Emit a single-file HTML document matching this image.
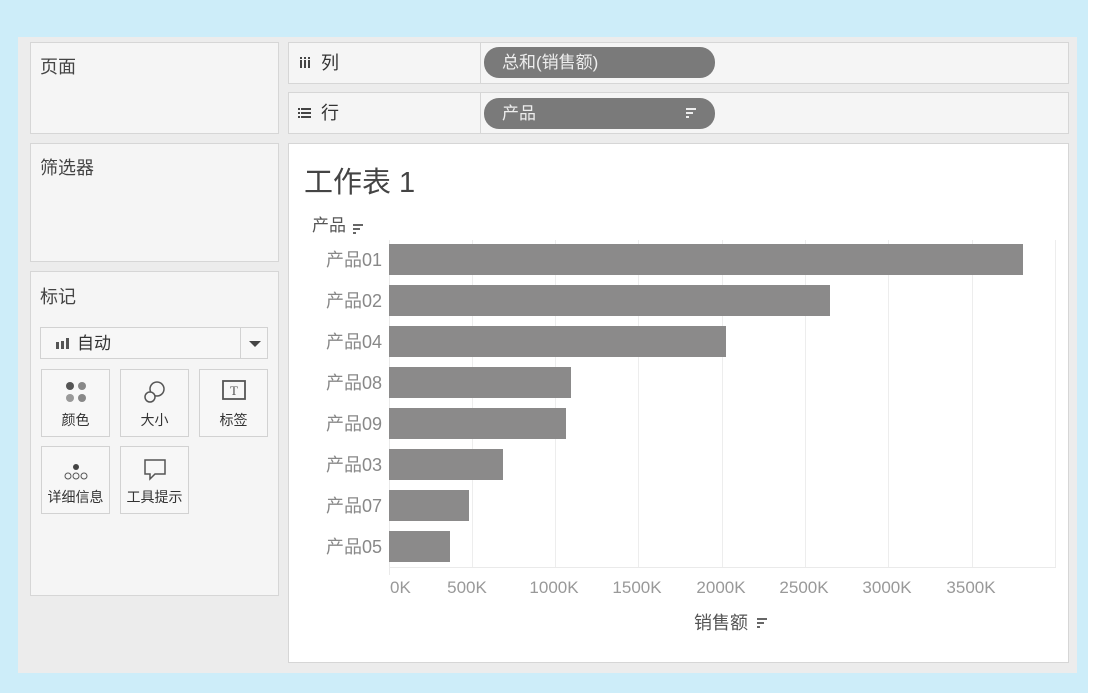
<!DOCTYPE html>
<html><head><meta charset="utf-8"><style>
*{margin:0;padding:0;box-sizing:border-box}
body{width:1100px;height:693px;background:#fff;position:relative;overflow:hidden;font-family:"Liberation Sans","Noto Sans CJK SC",sans-serif;color:#444;line-height:1.2}
.abs{position:absolute}
.bg{left:0;top:0;width:1088px;height:693px;background:#cdedf9}
.win{left:18px;top:37px;width:1059px;height:636px;background:#ececec}
.card{background:#f5f5f5;border:1px solid #d6d6d6}
.h{font-size:18px;color:#444}
.pill{background:#7a7a7a;color:#eee;border-radius:15px;height:31px;font-size:17px;line-height:31px;padding-left:18px}
.btn{background:#f7f7f7;border:1px solid #d2d2d2;width:69px;height:68px;font-size:14px;color:#333;text-align:center}
.lab{font-size:18px;color:#888;text-align:right;width:75px}
.bar{background:#8b8a8a;height:31px;left:389px}
.grid{width:1px;background:#ededed;top:240px;height:327px}
.tick{font-size:17px;color:#999;top:578px;width:80px;text-align:center}
</style></head><body>
<div class="abs bg"></div>
<div class="abs win"></div>
<div class="abs card" style="left:30px;top:42px;width:249px;height:92px"></div>
<div class="abs h" style="left:40px;top:57px">页面</div>
<div class="abs card" style="left:30px;top:143px;width:249px;height:119px"></div>
<div class="abs h" style="left:40px;top:158px">筛选器</div>
<div class="abs card" style="left:30px;top:271px;width:249px;height:325px"></div>
<div class="abs h" style="left:40px;top:287px">标记</div>
<div class="abs" style="left:40px;top:327px;width:228px;height:32px;background:#f7f7f7;border:1px solid #d2d2d2"></div>
<div class="abs" style="left:240px;top:328px;width:1px;height:30px;background:#d2d2d2"></div>
<div class="abs" style="left:249px;top:341px;width:0;height:0;border-left:6px solid transparent;border-right:6px solid transparent;border-top:6px solid #444"></div>
<svg class="abs" style="left:55px;top:337px" width="16" height="14"><rect x="1" y="5" width="3" height="7" fill="#555"/><rect x="6" y="4" width="3" height="8" fill="#555"/><rect x="11" y="1" width="3" height="11" fill="#555"/></svg>
<div class="abs" style="left:77px;top:334px;font-size:17px;color:#333">自动</div>

<div class="abs btn" style="left:41px;top:369px"><svg width="30" height="34" style="margin-top:7px"><circle cx="9" cy="9" r="4" fill="#555"/><circle cx="21" cy="9" r="4" fill="#888"/><circle cx="9" cy="21" r="4" fill="#999"/><circle cx="21" cy="21" r="4" fill="#888"/></svg><div style="margin-top:-3px">颜色</div></div>
<div class="abs btn" style="left:120px;top:369px"><svg width="30" height="34" style="margin-top:7px"><circle cx="17" cy="12" r="7" fill="none" stroke="#555" stroke-width="1.5"/><circle cx="10" cy="20" r="5" fill="#f7f7f7" stroke="#555" stroke-width="1.5"/></svg><div style="margin-top:-3px">大小</div></div>
<div class="abs btn" style="left:199px;top:369px"><svg width="30" height="34" style="margin-top:7px"><rect x="4" y="4" width="22" height="18" fill="none" stroke="#555" stroke-width="1.8"/><text x="15" y="18" font-size="13" text-anchor="middle" fill="#555" font-family="Liberation Serif">T</text></svg><div style="margin-top:-3px">标签</div></div>
<div class="abs btn" style="left:41px;top:446px"><svg width="30" height="34" style="margin-top:7px"><circle cx="15" cy="13" r="3" fill="#444"/><circle cx="7" cy="22" r="3" fill="none" stroke="#555"/><circle cx="15" cy="22" r="3" fill="none" stroke="#555"/><circle cx="23" cy="22" r="3" fill="none" stroke="#555"/></svg><div style="margin-top:-3px">详细信息</div></div>
<div class="abs btn" style="left:120px;top:446px"><svg width="30" height="34" style="margin-top:7px"><path d="M5 6h20v14h-10l-5 5v-5h-5z" fill="none" stroke="#555" stroke-width="1.5"/></svg><div style="margin-top:-3px">工具提示</div></div>

<div class="abs card" style="left:288px;top:42px;width:781px;height:42px"></div>
<div class="abs" style="left:480px;top:43px;width:1px;height:40px;background:#d6d6d6"></div>
<svg class="abs" style="left:299px;top:57px" width="14" height="12"><rect x="1" y="3" width="2" height="8" fill="#444"/><rect x="5" y="3" width="2" height="8" fill="#444"/><rect x="9" y="3" width="2" height="8" fill="#444"/><rect x="1" y="0" width="2" height="2" fill="#444"/><rect x="5" y="0" width="2" height="2" fill="#444"/><rect x="9" y="0" width="2" height="2" fill="#444"/></svg>
<div class="abs h" style="left:321px;top:53px;color:#333">列</div>
<div class="abs pill" style="left:484px;top:47px;width:231px">总和(销售额)</div>
<div class="abs card" style="left:288px;top:92px;width:781px;height:42px"></div>
<div class="abs" style="left:480px;top:93px;width:1px;height:40px;background:#d6d6d6"></div>
<svg class="abs" style="left:298px;top:107px" width="14" height="12"><rect x="0" y="1" width="2" height="2" fill="#444"/><rect x="3" y="1" width="10" height="2" fill="#444"/><rect x="0" y="5" width="2" height="2" fill="#444"/><rect x="3" y="5" width="10" height="2" fill="#444"/><rect x="0" y="9" width="2" height="2" fill="#444"/><rect x="3" y="9" width="10" height="2" fill="#444"/></svg>
<div class="abs h" style="left:321px;top:103px;color:#333">行</div>
<div class="abs pill" style="left:484px;top:98px;width:231px">产品</div>
<svg class="abs" style="left:686px;top:107px" width="12" height="12"><rect x="0" y="1" width="10" height="2" fill="#eee"/><rect x="0" y="5" width="7" height="2" fill="#eee"/><rect x="0" y="9" width="3" height="2" fill="#eee"/></svg>

<div class="abs" style="left:288px;top:143px;width:781px;height:520px;background:#fff;border:1px solid #d6d6d6"></div>
<div class="abs" style="left:304px;top:166px;font-size:29px;color:#444">工作表 1</div>
<div class="abs" style="left:312px;top:216px;font-size:17px;color:#555">产品</div>
<svg class="abs" style="left:353px;top:223px" width="12" height="12"><rect x="0" y="1" width="10" height="2" fill="#666"/><rect x="0" y="5" width="7" height="2" fill="#666"/><rect x="0" y="9" width="3" height="2" fill="#666"/></svg>

<div class="abs grid" style="left:472px"></div><div class="abs grid" style="left:555px"></div><div class="abs grid" style="left:638px"></div><div class="abs grid" style="left:722px"></div><div class="abs grid" style="left:805px"></div><div class="abs grid" style="left:888px"></div><div class="abs grid" style="left:972px"></div><div class="abs grid" style="left:1055px"></div>
<div class="abs" style="left:389px;top:567px;width:667px;height:1px;background:#eaeaea"></div>
<div class="abs" style="left:389px;top:240px;width:1px;height:335px;background:#eaeaea"></div>

<div class="abs bar" style="top:244px;width:634px"></div><div class="abs lab" style="left:307px;top:250px">产品01</div>
<div class="abs bar" style="top:285px;width:441px"></div><div class="abs lab" style="left:307px;top:291px">产品02</div>
<div class="abs bar" style="top:326px;width:337px"></div><div class="abs lab" style="left:307px;top:332px">产品04</div>
<div class="abs bar" style="top:367px;width:182px"></div><div class="abs lab" style="left:307px;top:373px">产品08</div>
<div class="abs bar" style="top:408px;width:177px"></div><div class="abs lab" style="left:307px;top:414px">产品09</div>
<div class="abs bar" style="top:449px;width:114px"></div><div class="abs lab" style="left:307px;top:455px">产品03</div>
<div class="abs bar" style="top:490px;width:80px"></div><div class="abs lab" style="left:307px;top:496px">产品07</div>
<div class="abs bar" style="top:531px;width:61px"></div><div class="abs lab" style="left:307px;top:537px">产品05</div>

<div class="abs tick" style="left:390px;width:auto;text-align:left">0K</div>
<div class="abs tick" style="left:427px">500K</div>
<div class="abs tick" style="left:514px">1000K</div>
<div class="abs tick" style="left:597px">1500K</div>
<div class="abs tick" style="left:681px">2000K</div>
<div class="abs tick" style="left:764px">2500K</div>
<div class="abs tick" style="left:847px">3000K</div>
<div class="abs tick" style="left:931px">3500K</div>
<div class="abs" style="left:694px;top:613px;font-size:18px;color:#555">销售额</div>
<svg class="abs" style="left:757px;top:617px" width="12" height="12"><rect x="0" y="1" width="10" height="2" fill="#666"/><rect x="0" y="5" width="7" height="2" fill="#666"/><rect x="0" y="9" width="3" height="2" fill="#666"/></svg>
</body></html>
